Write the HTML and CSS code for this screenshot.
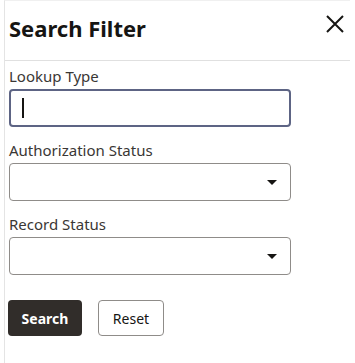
FILE: index.html
```html
<!DOCTYPE html>
<html lang="en">
<head>
  <meta charset="UTF-8" />
  <title>Search Filter</title>
  <link rel="stylesheet" href="styles.css">
</head>
<body>
  <div class="panel">
    <div class="panel-header">
      <h1>Search Filter</h1>
      <button class="close-btn" aria-label="Close">
        <svg width="20" height="20" viewBox="0 0 20 20">
          <path d="M2 2 L18 18 M18 2 L2 18" stroke="#161513" stroke-width="2" fill="none" />
        </svg>
      </button>
    </div>

    <form class="filter-form">
      <label class="field">
        <span class="field-label">Lookup Type</span>
        <span class="text-input focused"><span class="caret"></span></span>
      </label>

      <label class="field">
        <span class="field-label">Authorization Status</span>
        <span class="select-input"><span class="arrow"></span></span>
      </label>

      <label class="field">
        <span class="field-label">Record Status</span>
        <span class="select-input"><span class="arrow"></span></span>
      </label>

      <div class="actions">
        <button type="button" class="btn btn-primary">Search</button>
        <button type="button" class="btn btn-secondary">Reset</button>
      </div>
    </form>
  </div>
</body>
</html>
```

FILE: styles.css
```css
body {
  margin: 0;
  background: #fff;
  font-family: 'Noto Sans', sans-serif;
  color: #161513;
}

.panel {
  margin-left: 4px;
  width: 346px;
  height: 363px;
  border-left: 1px solid #e4e4e4;
  border-top: 1px solid #f0f0f0;
  box-sizing: border-box;
}

.panel-header {
  display: flex;
  justify-content: space-between;
  align-items: center;
  height: 59px;
  padding: 0 5px 0 4px;
  border-bottom: 1px solid #e0e0e0;
}

.panel-header h1 {
  margin: 0;
  font-size: 22px;
  font-weight: 700;
  padding-bottom: 6px;
}

.close-btn {
  border: none;
  background: none;
  padding: 0;
  width: 20px;
  height: 20px;
  margin-bottom: 14px;
}

.filter-form {
  padding: 4px 4px 0;
}

.field {
  display: flex;
  flex-direction: column;
  margin-bottom: 12px;
}

.field-label {
  font-size: 15px;
  color: #3a3735;
  line-height: 22px;
  margin-bottom: 2px;
}

.text-input,
.select-input {
  position: relative;
  width: 282px;
  height: 38px;
  box-sizing: border-box;
  border-radius: 4px;
  background: #fff;
}

.text-input {
  border: 2px solid #5d6484;
}

.caret {
  position: absolute;
  left: 11px;
  top: 7px;
  width: 2px;
  height: 20px;
  background: #161513;
}

.select-input {
  border: 1px solid #8f8c89;
}

.arrow {
  position: absolute;
  right: 13px;
  top: 16px;
  border-left: 5px solid transparent;
  border-right: 5px solid transparent;
  border-top: 5px solid #161513;
}

.actions {
  display: flex;
  gap: 16px;
  margin-top: 25px;
}

.btn {
  height: 36px;
  border-radius: 4px;
  font-family: 'Noto Sans', sans-serif;
  font-size: 14px;
  cursor: pointer;
}

.btn-primary {
  width: 74px;
  margin-left: -1px;
  background: #312d2a;
  color: #fff;
  border: none;
  font-weight: 700;
}

.btn-secondary {
  width: 66px;
  background: #fff;
  color: #161513;
  border: 1px solid #8f8c89;
}
```
